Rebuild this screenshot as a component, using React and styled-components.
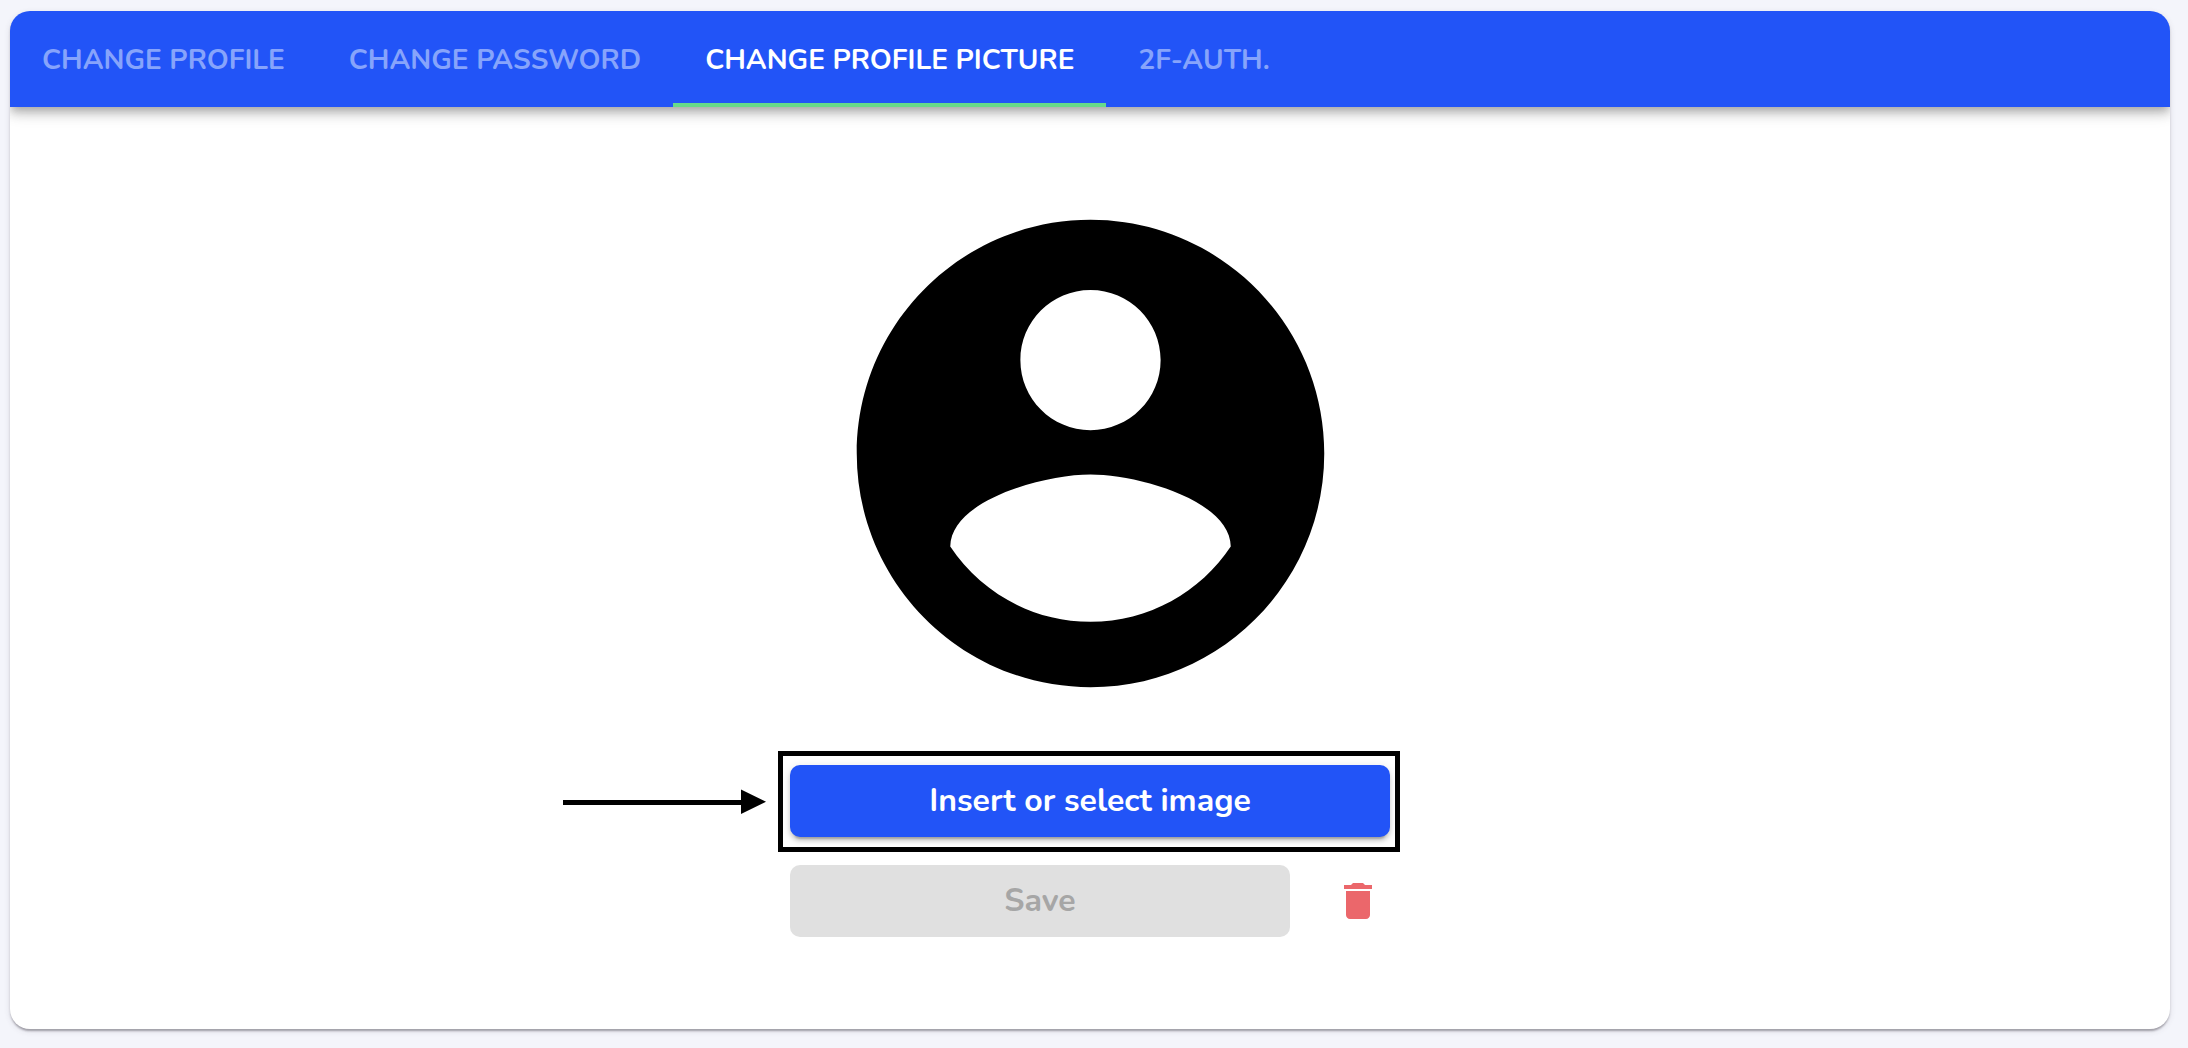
import React, { useState } from 'react'
import styled, { createGlobalStyle } from 'styled-components';
import { MdDelete } from 'react-icons/md';

const tabs = [
    { id: "profile", label: "Change profile" },
    { id: "password", label: "Change password" },
    { id: "picture", label: "Change profile picture" },
    { id: "auth", label: "2F-Auth." }
];

const App = () => {
    const [active, setActive] = useState("picture");

    return <Page>
        <GlobalStyle />
        <Card>
            <TabBar role="tablist">
                {tabs.map((tab) => (
                    <Tab
                        key={tab.id}
                        role="tab"
                        type="button"
                        aria-selected={active === tab.id}
                        $active={active === tab.id}
                        onClick={() => setActive(tab.id)}
                    >
                        {tab.label}
                    </Tab>
                ))}
            </TabBar>
            <Panel>
                <Avatar viewBox="0 0 24 24" aria-hidden="true">
                    <path d="M12 2C6.48 2 2 6.48 2 12s4.48 10 10 10 10-4.48 10-10S17.52 2 12 2zm0 3c1.66 0 3 1.34 3 3s-1.34 3-3 3-3-1.34-3-3 1.34-3 3-3zm0 14.2c-2.5 0-4.71-1.28-6-3.22.03-1.99 4-3.08 6-3.08 1.99 0 5.97 1.09 6 3.08-1.29 1.94-3.5 3.22-6 3.22z" />
                </Avatar>
                <Actions>
                    <SelectWrapper>
                        <Button type="button">Insert or select image</Button>
                        <Highlight />
                        <Arrow viewBox="0 0 203 26" aria-hidden="true">
                            <path d="M0 11h178V0.5l25 12.2-25 12.3v-9H0z" />
                        </Arrow>
                    </SelectWrapper>
                    <SaveRow>
                        <Button type="button" disabled>Save</Button>
                        <DeleteButton type="button" aria-label="Delete">
                            <MdDelete />
                        </DeleteButton>
                    </SaveRow>
                </Actions>
            </Panel>
        </Card>
    </Page>
};

export default App;

const GlobalStyle = createGlobalStyle`
    * {
        box-sizing: border-box;
    }
    body {
        margin: 0;
        background: #f4f5fb;
        font-family: Nunito, Lato, sans-serif;
    }
`;

const Page = styled.main`
    padding: 11px 18px 19px 10px;
`;

const Card = styled.section`
    overflow: hidden;
    background: white;
    border-radius: 20px;
    box-shadow: 0 4px 2px -2px rgba(58, 53, 65, .2), 0 2px 2px rgba(58, 53, 65, .24), 0 2px 6px rgba(58, 53, 65, .12);
`;

const TabBar = styled.div`
    display: flex;
    height: 96px;
    background: #2254f7;
    box-shadow: 0 4px 8px -2px rgba(0, 0, 0, .2), 0 8px 10px rgba(0, 0, 0, .14), 0 2px 20px rgba(0, 0, 0, .12);
`;

const Tab = styled.button`
    padding: 6px 32px 0;
    border: 0;
    border-bottom: 4px solid ${(props) => props.$active ? "#68da89" : "transparent"};
    background: none;
    color: ${(props) => props.$active ? "white" : "#87a4fb"};
    font-family: inherit;
    font-size: 28px;
    font-weight: 700;
    text-transform: uppercase;
    cursor: pointer;
`;

const Panel = styled.div`
    display: flex;
    flex-direction: column;
    align-items: center;
    gap: 31px;
    padding: 66px 24px 92px;
`;

const Avatar = styled.svg`
    width: 561px;
    max-width: 100%;
    height: 561px;
    fill: black;
`;

const Actions = styled.div`
    display: flex;
    flex-direction: column;
    gap: 28px;
    width: 600px;
    max-width: 100%;
`;

const SelectWrapper = styled.div`
    position: relative;
    display: flex;
`;

const Button = styled.button`
    flex: 1;
    height: 72px;
    padding: 0 16px 2px;
    border: 0;
    border-radius: 10px;
    background: #2254f7;
    color: white;
    font-family: inherit;
    font-size: 32px;
    font-weight: 700;
    box-shadow: 0 6px 2px -4px rgba(0, 0, 0, .2), 0 4px 4px rgba(0, 0, 0, .14), 0 2px 10px rgba(0, 0, 0, .12);
    cursor: pointer;

    &:disabled {
        background: #e0e0e0;
        color: #a6a6a6;
        box-shadow: none;
        cursor: default;
    }
`;

const Highlight = styled.div`
    position: absolute;
    inset: -14px -10px -15px -12px;
    border: 5px solid black;
    pointer-events: none;
`;

const Arrow = styled.svg`
    position: absolute;
    top: 24px;
    right: calc(100% + 24px);
    width: 203px;
    height: 26px;
`;

const SaveRow = styled.div`
    display: flex;
    align-items: center;
    gap: 44px;
    padding-right: 8px;
`;

const DeleteButton = styled.button`
    display: flex;
    padding: 0;
    border: 0;
    background: none;
    color: #eb676b;
    font-size: 48px;
    cursor: pointer;
`;
